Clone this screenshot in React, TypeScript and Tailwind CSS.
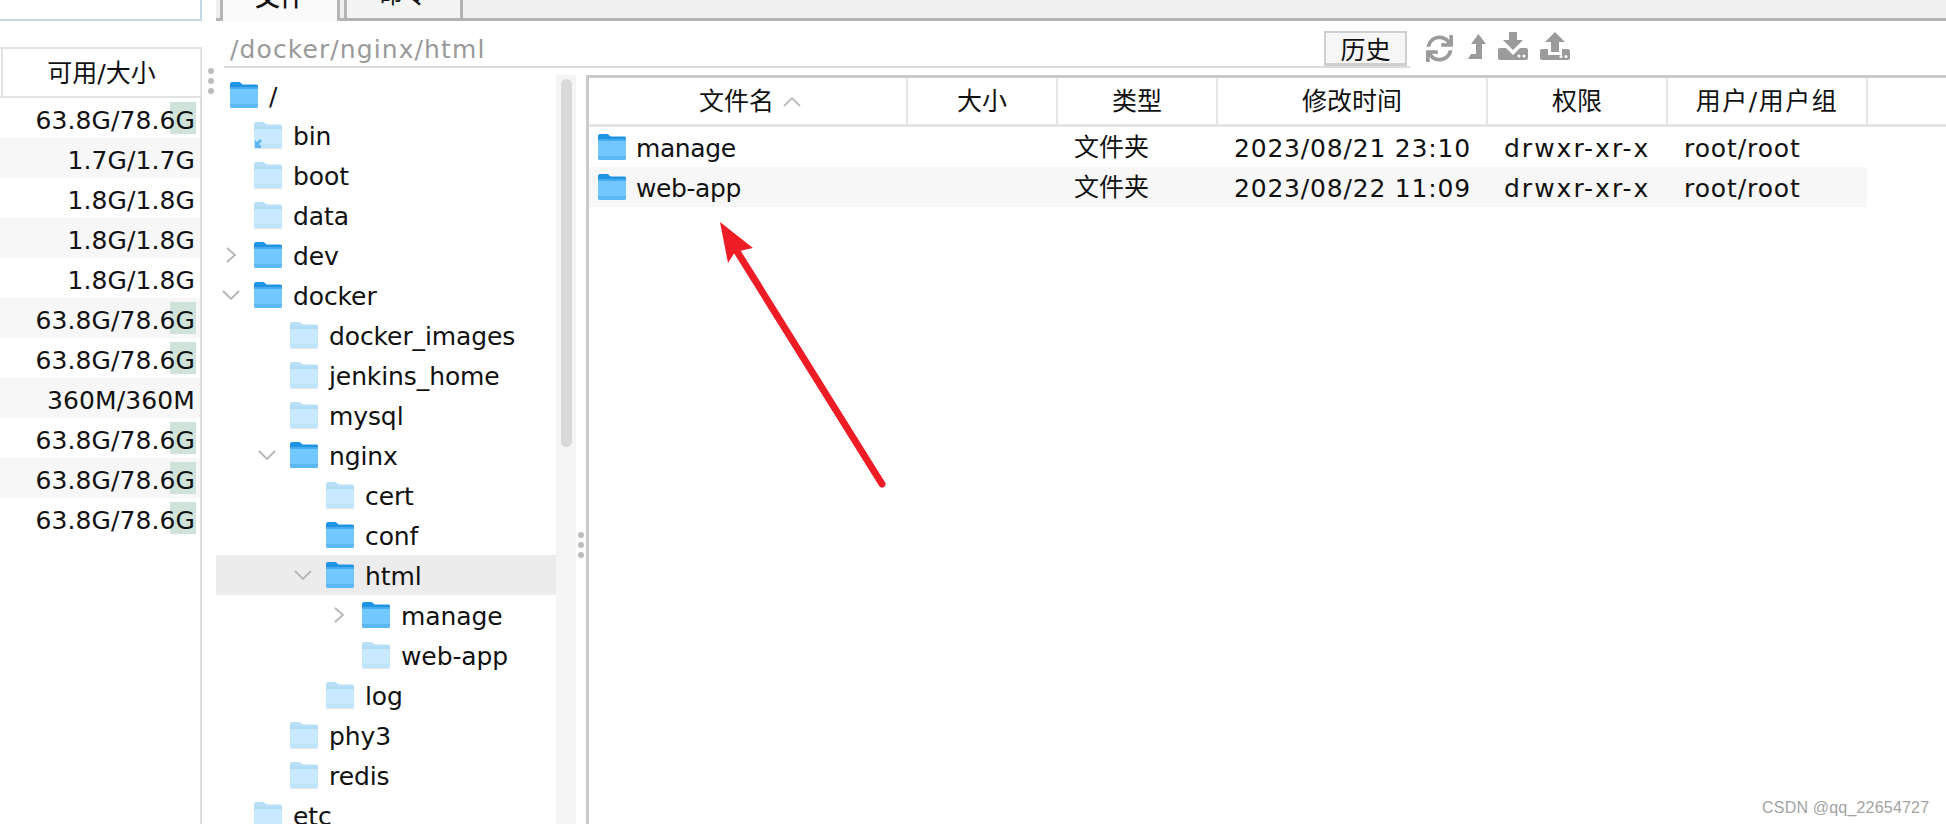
import React from 'react';
import { FaSync } from 'react-icons/fa';

const DISK_ROWS = [
  { value: '63.8G/78.6G', bar: true },
  { value: '1.7G/1.7G', bar: false },
  { value: '1.8G/1.8G', bar: false },
  { value: '1.8G/1.8G', bar: false },
  { value: '1.8G/1.8G', bar: false },
  { value: '63.8G/78.6G', bar: true },
  { value: '63.8G/78.6G', bar: true },
  { value: '360M/360M', bar: false },
  { value: '63.8G/78.6G', bar: true },
  { value: '63.8G/78.6G', bar: true },
  { value: '63.8G/78.6G', bar: true },
];

type TreeNode = {
  level: number;
  name: string;
  dark?: boolean;
  chevron?: 'right' | 'down';
  alias?: boolean;
  selected?: boolean;
};

const TREE: TreeNode[] = [
  { level: 0, name: '/', dark: true },
  { level: 1, name: 'bin', alias: true },
  { level: 1, name: 'boot' },
  { level: 1, name: 'data' },
  { level: 1, name: 'dev', dark: true, chevron: 'right' },
  { level: 1, name: 'docker', dark: true, chevron: 'down' },
  { level: 2, name: 'docker_images' },
  { level: 2, name: 'jenkins_home' },
  { level: 2, name: 'mysql' },
  { level: 2, name: 'nginx', dark: true, chevron: 'down' },
  { level: 3, name: 'cert' },
  { level: 3, name: 'conf', dark: true },
  { level: 3, name: 'html', dark: true, chevron: 'down', selected: true },
  { level: 4, name: 'manage', dark: true, chevron: 'right' },
  { level: 4, name: 'web-app' },
  { level: 3, name: 'log' },
  { level: 2, name: 'phy3' },
  { level: 2, name: 'redis' },
  { level: 1, name: 'etc' },
];

const INDENT = ['w-[1px]', 'w-[37px]', 'w-[73px]', 'w-[109px]', 'w-[145px]'];

const FILES = [
  { name: 'manage', time: '2023/08/21 23:10' },
  { name: 'web-app', time: '2023/08/22 11:09' },
];

const Folder = ({ dark, alias }: { dark?: boolean; alias?: boolean }) => {
  const tab = dark ? '#1f93e4' : '#b8dff7';
  const band = dark ? '#46acef' : '#aedbf6';
  const body = dark ? '#72c7ff' : '#c9eafe';
  const foot = dark ? '#5cb8f5' : '#bfe4fb';
  return (
    <svg width="30" height="28" viewBox="0 0 30 28" className="shrink-0">
      <path d="M1 3 q0-2 2-2 h7 q1.5 0 2.500 1.500 l1 1 h14 q1.500 0 1.500 2 v5 h-28 z" fill={tab} />
      <rect x="1" y="6" width="28" height="3" fill={band} />
      <path d="M1 8 h28 v17 q0 2-2 2 h-24 q-2 0-2-2 z" fill={body} />
      <path d="M1 23 h28 v2 q0 2-2 2 h-24 q-2 0-2-2 z" fill={foot} />
      {!dark && <path d="M1 27.500 h28" stroke="#dfe6ea" strokeWidth="1" />}
      {alias && <path d="M2 27 v-8 l2 2 3-3 2 2 -3 3 2 2 v2 z" fill="#5db4f0" />}
    </svg>
  );
};

const Chevron = ({ dir }: { dir: 'right' | 'down' }) => (
  <svg width="18" height="18" viewBox="0 0 18 18" className="shrink-0">
    <path
      d={dir === 'right' ? 'M5 2 L13 9 L5 16' : 'M1 5 L9 13 L17 5'}
      fill="none"
      stroke="#b5b5b5"
      strokeWidth="1.800"
    />
  </svg>
);

const Dots = () => (
  <div className="flex flex-col gap-[4px]">
    <span className="h-[6px] w-[6px] rounded-full bg-[#bcbcbc]" />
    <span className="h-[6px] w-[6px] rounded-full bg-[#bcbcbc]" />
    <span className="h-[6px] w-[6px] rounded-full bg-[#bcbcbc]" />
  </div>
);

const DiskPanel = () => (
  <div className="w-[202px] shrink-0 flex flex-col">
    <div className="h-[21px] shrink-0 border-r-2 border-b-2 border-[#c3d8e4]" />
    <div className="mt-[26px] h-[51px] shrink-0 flex border-y-[2px] border-r-2 border-[#e2e2e2]">
      <div className="w-[3px] border-r-2 border-[#e2e2e2]" />
      <div className="flex-1 flex items-center justify-center pt-[2px]">可用/大小</div>
    </div>
    <div className="flex-1 border-r-2 border-[#dcdcdc]">
      {DISK_ROWS.map((row, i) => (
        <div
          key={i}
          className={`relative h-[40px] flex items-center justify-end pr-[5px] pt-[4px] tracking-[0.1px] ${i % 2 === 1 ? 'bg-[#f7f7f7]' : ''}`}
        >
          {row.bar && <div className="absolute right-[4px] top-[4px] h-[32px] w-[26px] bg-[#cfe3db]" />}
          <span className="relative">{row.value}</span>
        </div>
      ))}
    </div>
  </div>
);

const Tabs = () => (
  <div className="h-[21px] shrink-0 ml-[14px] flex bg-[#f0f0f0] border-b-[3px] border-[#b4b4b4]">
    <div className="ml-[4px] h-[21px] w-[120px] overflow-hidden flex justify-center items-end pb-[11px] bg-[#fafafa] border-x-[3px] border-[#b4b4b4] font-medium leading-none">
      文件
    </div>
    <div className="ml-[4px] h-[21px] w-[119px] overflow-hidden flex justify-center items-end pb-[11px] bg-[#f4f4f4] border-x-[3px] border-b-[3px] border-[#b4b4b4] leading-none">
      命令
    </div>
  </div>
);

const PathBar = () => (
  <div className="h-[54px] shrink-0 flex items-start">
    <div className="ml-[22px] w-[1186px] h-[47px] flex items-end justify-between border-b-2 border-[#dcdcdc]">
      <span className="pl-[6px] pb-[4px] text-[#9a9a9a] tracking-[1.1px]">/docker/nginx/html</span>
      <button className="mr-[3px] h-[35px] w-[83px] flex items-center justify-center pt-[4px] bg-[#f6f6f6] border-2 border-b-[3px] border-[#cfcfcf]">
        历史
      </button>
    </div>
    <div className="ml-[16px] mt-[11px] h-[30px] flex text-[#9b9b9b]">
      <FaSync className="mt-[3px] h-[27px] w-[27px]" />
      <svg width="18" height="25" viewBox="0 0 18 25" className="ml-[15px] mt-[2px]" fill="currentColor">
        <path d="M10.500 0 L18 10 H14 V25 H0 L3 20 H8 V10 H3 Z" />
      </svg>
      <svg width="30" height="28" viewBox="0 0 30 28" className="ml-[12px]" fill="currentColor">
        <path d="M11 0 H19 V8 H25 L15 18 L5 8 H11 Z" />
        <path d="M2 16 H8 L15 23 L22 16 H28 Q30 16 30 18 V26 Q30 28 28 28 H2 Q0 28 0 26 V18 Q0 16 2 16 Z" />
        <circle cx="21" cy="24" r="1.500" fill="#fff" />
        <circle cx="26" cy="24" r="1.500" fill="#fff" />
      </svg>
      <svg width="30" height="28" viewBox="0 0 30 28" className="ml-[12px]" fill="currentColor">
        <path d="M15 0 L25 10 H19 V20 H11 V10 H5 Z" />
        <path d="M2 17 H8 V23 H22 V17 H28 Q30 17 30 19 V26 Q30 28 28 28 H2 Q0 28 0 26 V19 Q0 17 2 17 Z" />
        <circle cx="21" cy="24.500" r="1.500" fill="#fff" />
        <circle cx="26" cy="24.500" r="1.500" fill="#fff" />
      </svg>
    </div>
  </div>
);

const TreeRow = ({ node }: { node: TreeNode }) => (
  <div className={`h-[40px] flex items-center ${node.selected ? 'bg-[#ececec]' : ''}`}>
    <div className={`${INDENT[node.level]} shrink-0 flex justify-end pr-[13px]`}>
      {node.chevron && <Chevron dir={node.chevron} />}
    </div>
    <Folder dark={node.dark} alias={node.alias} />
    <span className="ml-[10px] pt-[2px] -tracking-[0.1px]">{node.name}</span>
  </div>
);

const Tree = () => (
  <div className="ml-[14px] w-[340px] shrink-0">
    {TREE.map((node) => (
      <TreeRow key={node.name + node.level} node={node} />
    ))}
  </div>
);

const Scrollbar = () => (
  <div className="w-[20px] shrink-0 bg-[#f5f5f5] pt-[4px] flex justify-center">
    <div className="h-[368px] w-[11px] rounded-full bg-[#d9d9d9]" />
  </div>
);

const HEAD_CELL = 'h-full flex items-center justify-center border-r-2 border-[#e6e6e6]';

const FileTable = () => (
  <div className="flex-1 border-l-[3px] border-t-[3px] border-[#cacaca]">
    <div className="h-[49px] flex border-b-[3px] border-[#e6e6e6]">
      <div className={`${HEAD_CELL} w-[319px]`}>
        文件名
        <svg width="18" height="11" viewBox="0 0 18 11" className="ml-[9px] -mr-[5px]">
          <path d="M1 10 L9 2 L17 10" fill="none" stroke="#bdbdbd" strokeWidth="1.800" />
        </svg>
      </div>
      <div className={`${HEAD_CELL} w-[150px]`}>大小</div>
      <div className={`${HEAD_CELL} w-[160px]`}>类型</div>
      <div className={`${HEAD_CELL} w-[270px]`}>修改时间</div>
      <div className={`${HEAD_CELL} w-[180px]`}>权限</div>
      <div className={`${HEAD_CELL} w-[200px] tracking-[1.5px]`}>用户/用户组</div>
    </div>
    {FILES.map((f, i) => (
      <div key={f.name} className={`h-[40px] w-[1278px] flex items-center ${i === 1 ? 'bg-[#f7f7f7]' : ''}`}>
        <div className="w-[319px] flex items-center pl-[8px]">
          <Folder dark />
          <span className="ml-[9px] pt-[2px] -tracking-[0.4px]">{f.name}</span>
        </div>
        <div className="w-[150px]" />
        <div className="w-[160px] pl-[16px]">文件夹</div>
        <div className="w-[270px] pl-[16px] pt-[2px] tracking-[0.8px]">{f.time}</div>
        <div className="w-[180px] pl-[16px] pt-[2px] tracking-[2px]">drwxr-xr-x</div>
        <div className="w-[199px] pl-[16px] pt-[2px] tracking-[0.9px]">root/root</div>
      </div>
    ))}
  </div>
);

export default function App() {
  return (
    <div className="relative flex h-[824px] w-[1946px] overflow-hidden bg-white text-[25px] leading-none text-[#111] font-['DejaVu_Sans','Noto_Sans_CJK_SC',sans-serif]">
      <DiskPanel />
      <div className="flex-1 min-w-0 flex flex-col">
        <Tabs />
        <PathBar />
        <div className="flex-1 min-h-0 flex">
          <Tree />
          <Scrollbar />
          <div className="w-[10px] shrink-0 pt-[457px] flex justify-center">
            <Dots />
          </div>
          <FileTable />
        </div>
      </div>

      {/* tree splitter handle sits over the folder icon */}
      <div className="absolute left-[208px] top-[68px]">
        <Dots />
      </div>

      {/* red annotation arrow */}
      <svg className="absolute left-0 top-0 pointer-events-none" width="1946" height="824">
        <path d="M720 222 L753 248 L735 252 L728 263 Z" fill="#ee1c25" />
        <path d="M733 245 L882 484" stroke="#ee1c25" strokeWidth="7" strokeLinecap="round" />
      </svg>

      <div className="absolute left-[1762px] top-[799px] text-[16px] leading-[18px] tracking-[0.2px] text-[#a3a3a3] font-['Liberation_Sans',sans-serif]">
        CSDN @qq_22654727
      </div>
    </div>
  );
}
